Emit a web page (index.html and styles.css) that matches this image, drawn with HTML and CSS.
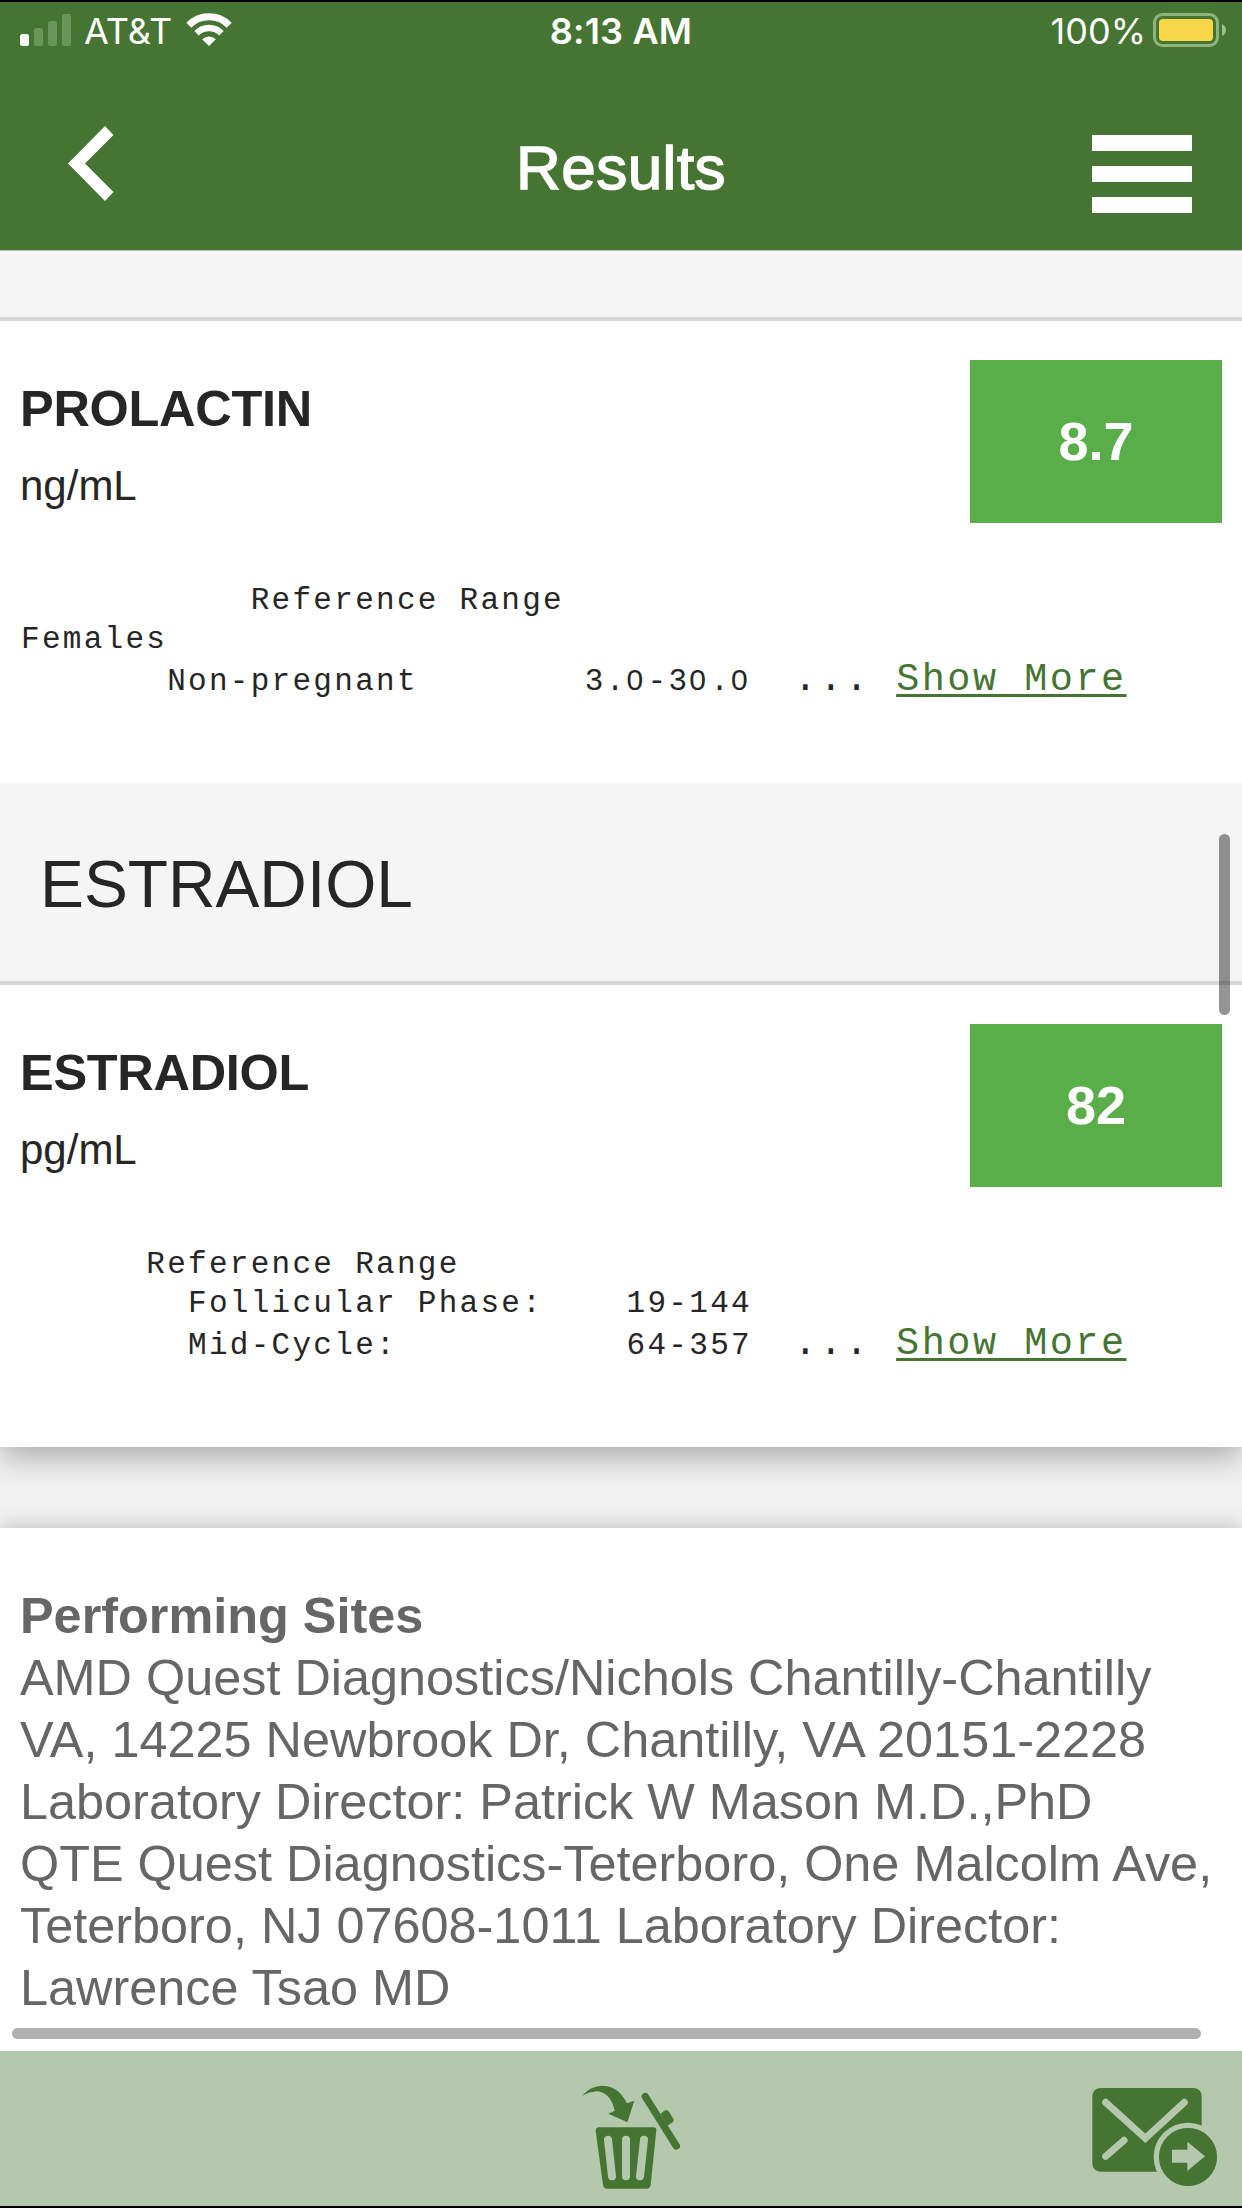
FILE: index.html
```html
<!DOCTYPE html>
<html lang="en">
<head>
    <meta charset="UTF-8">
    <meta name="viewport" content="width=device-width, initial-scale=1.0">
    <title>Results</title>
    <link rel="stylesheet" href="styles.css">
</head>
<body>
    <div class="phone">
        <div class="status">
            <div class="carrier">
                <svg width="51" height="32" viewBox="0 0 51 32" fill="#fff">
                    <rect x="0" y="20" width="9" height="12" rx="2.5"/>
                    <g fill="#6a965a">
                        <rect x="14" y="14" width="9" height="18" rx="2.5"/>
                        <rect x="28" y="7" width="9" height="25" rx="2.5"/>
                        <rect x="42" y="0" width="9" height="32" rx="2.5"/>
                    </g>
                </svg>
                <span>AT&amp;T</span>
                <svg class="wifi" width="46" height="33" viewBox="0 0 46 33">
                    <path d="M2.8 12.2a28.5 28.5 0 0 1 40.4 0" fill="none" stroke="#fff" stroke-width="7"/>
                    <path d="M10.6 20.2a17.5 17.5 0 0 1 24.8 0" fill="none" stroke="#fff" stroke-width="6.4"/>
                    <path d="M23 33l-6.800-6.800a9.600 9.600 0 0 1 13.600 0z" fill="#fff"/>
                </svg>
            </div>
            <div class="time">8:13 AM</div>
            <div class="battery">
                <span>100%</span>
                <svg width="74" height="34" viewBox="0 0 74 34">
                    <rect x="1.500" y="1.500" width="63" height="31" rx="8" fill="none" stroke="#8db57d" stroke-width="3"/>
                    <rect x="6" y="6" width="54" height="22" rx="4" fill="#f7d748"/>
                    <path d="M69 11q4 2 4 6t-4 6z" fill="#9cc08d"/>
                </svg>
            </div>
        </div>
        <div class="header">
            <svg class="back" width="46" height="75" viewBox="0 0 46 75">
                <path d="M37 0l8.500 9-28.500 28.500 28.500 28.500-8.500 9L0 37.500z" fill="#fff"/>
            </svg>
            <h1>Results</h1>
            <div class="menu"><i></i><i></i><i></i></div>
        </div>
        <div class="content">
            <div class="results">
                <div class="group first"></div>
                <div class="test">
                    <div class="row">
                        <div>
                            <h3>PROLACTIN</h3>
                            <p>ng/mL</p>
                        </div>
                        <div class="value">8.7</div>
                    </div>
<pre>           Reference Range
Females
       Non-pregnant        3.<i>0</i>-3<i>0</i>.<i>0</i>  <b>... <a href="#">Show More</a></b></pre>
                </div>
                <h2 class="group">ESTRADIOL</h2>
                <div class="test">
                    <div class="row">
                        <div>
                            <h3>ESTRADIOL</h3>
                            <p>pg/mL</p>
                        </div>
                        <div class="value">82</div>
                    </div>
<pre>      Reference Range
        Follicular Phase:    19-144
        Mid-Cycle:           64-357  <b>... <a href="#">Show More</a></b></pre>
                </div>
            </div>
            <div class="sites">
                <h4>Performing Sites</h4>
                <p>AMD Quest Diagnostics/Nichols Chantilly-Chantilly<br>
                VA, 14225 Newbrook Dr, Chantilly, VA 20151-2228<br>
                Laboratory Director: Patrick W Mason M.D.,PhD<br>
                QTE Quest Diagnostics-Teterboro, One Malcolm Ave,<br>
                Teterboro, NJ 07608-1011 Laboratory Director:<br>
                Lawrence Tsao MD</p>
            </div>
            <div class="scroll-y"></div>
            <div class="scroll-x"></div>
        </div>
        <div class="footer">
            <svg class="trash" width="100" height="107" viewBox="60 190 300 321">
                <g fill="#467533">
                    <path d="M66 228Q92 198 128 198C165 199 187 222 201 251L223 243L202 308L145 282L164 273C158 243 141 216 110 215Q88 216 66 228z"/>
                    <path d="M116 323H281Q290 323 289 332L272 496Q270 507 260 507H141Q131 507 129 496L107 334Q107 323 116 323z"/>
                    <path d="M302 282L313 273Q321 268 327 276L340 297Q343 305 336 309L322 318z"/>
                </g>
                <path d="M256 231L349 379" stroke="#467533" stroke-width="22" stroke-linecap="round"/>
                <path d="M144 360L156 470M198 360V470M252 360L240 470" stroke="#b3c8ad" stroke-width="24" stroke-linecap="round"/>
            </svg>
            <svg class="mail" width="130" height="100" viewBox="90 200 390 300">
                <rect x="97" y="203" width="328" height="251" rx="24" fill="#467533"/>
                <path d="M137 246L256 354L373 246M137 408L192 360" fill="none" stroke="#b3c8ad" stroke-width="21" stroke-linecap="round"/>
                <circle cx="384" cy="410" r="95" fill="#467533" stroke="#b3c8ad" stroke-width="16"/>
                <circle cx="384" cy="410" r="86" fill="#467533"/>
                <path d="M336 388H382V364L435 408L382 452V427H336z" fill="#b3c8ad"/>
            </svg>
        </div>
    </div>
</body>
</html>
```
FILE: styles.css
```css
*{
    margin: 0;
    padding: 0;
    box-sizing: border-box;
}
body{
    background: #000;
    font-family: "Liberation Sans", Arial, sans-serif;
    color: #262626;
}
.phone{
    width: 1242px;
    height: 2208px;
    border-top: 2px solid #000;
    border-bottom: 2px solid #000;
    display: flex;
    flex-direction: column;
    overflow: hidden;
}
.status{
    height: 58px;
    padding: 0 15px;
    background: #467533;
    color: #fff;
    display: grid;
    grid-template-columns: 1fr auto 1fr;
    font: 36px/58px Inter, sans-serif;
}
.carrier, .battery{
    display: flex;
    align-items: flex-start;
}
.carrier{
    padding-left: 5px;
}
.carrier svg{
    margin-top: 12px;
}
.carrier span{
    margin-left: 13px;
}
.carrier .wifi{
    margin-left: 14px;
    margin-top: 11px;
}
.time{
    font-weight: 600;
    letter-spacing: 0.2px;
}
.battery{
    justify-content: flex-end;
    gap: 7px;
}
.battery svg{
    margin-top: 11px;
}
.header{
    height: 190px;
    padding: 0 50px;
    background: #467533;
    color: #fff;
    display: grid;
    grid-template-columns: 1fr auto 1fr;
    align-items: start;
}
.header .back{
    margin: 66px 0 0 18px;
}
.header h1{
    font-size: 62px;
    font-weight: normal;
    line-height: 72px;
    letter-spacing: 0.5px;
    margin-top: 72px;
    -webkit-text-stroke: 1.5px #fff;
}
.menu{
    display: flex;
    flex-direction: column;
    gap: 15px;
    width: 100px;
    margin-top: 75px;
    justify-self: end;
}
.menu i{
    height: 16px;
    background: #fff;
}
.content{
    flex: 1;
    position: relative;
    border-top: 1px solid #bbb;
    background: #f2f2f2;
    overflow: hidden;
}
.results{
    background: #fff;
    box-shadow: 0 10px 30px rgba(0,0,0,0.3);
}
.group{
    height: 202px;
    padding-left: 40px;
    border-bottom: 4px solid #d8d8d8;
    background: #f5f5f5;
    font-size: 65.800px;
    font-weight: normal;
    line-height: 203px;
}
.group.first{
    height: 70px;
}
.test{
    height: 462px;
    padding: 39px 20px 0;
}
.row{
    display: flex;
    justify-content: space-between;
    height: 217px;
}
.test h3{
    font-size: 50.500px;
    line-height: 58px;
    letter-spacing: -0.3px;
    margin-top: 20px;
}
.test p{
    font-size: 42px;
    line-height: 48px;
    margin-top: 24px;
}
.value{
    width: 252px;
    height: 163px;
    background: #5aae49;
    color: #fff;
    font-size: 54px;
    font-weight: bold;
    line-height: 163px;
    text-align: center;
}
.test pre{
    padding: 4px 0 0 1px;
    font: 31px/39px "Liberation Mono", monospace;
    letter-spacing: 2.28px;
}
/* plain zero, the mono one has a dot in it */
.test pre i{
    font-family: "Liberation Sans", sans-serif;
    font-style: normal;
    font-size: 30px;
    letter-spacing: 4.200px;
}
.test pre b{
    font-size: 38.500px;
    font-weight: normal;
    line-height: 42px;
    letter-spacing: 2.500px;
}
.test a{
    color: #467533;
    text-decoration-thickness: 3px;
    text-underline-offset: 4px;
}
.sites{
    height: 540px;
    margin-top: 81px;
    padding: 57px 20px 0;
    background: #fff;
    box-shadow: 0 0 20px rgba(0,0,0,0.25);
    color: #666;
    font-size: 50.400px;
    line-height: 62px;
    white-space: nowrap;
}
.scroll-y{
    position: absolute;
    top: 583px;
    left: 1219px;
    width: 11px;
    height: 181px;
    border-radius: 6px;
    background: rgba(0,0,0,0.42);
}
.scroll-x{
    position: absolute;
    top: 1777px;
    left: 12px;
    width: 1189px;
    height: 11px;
    border-radius: 6px;
    background: #b0b0b0;
}
.footer{
    height: 155px;
    padding-right: 22px;
    background: #b3c8ad;
    display: grid;
    grid-template-columns: 580px 1fr auto;
}
.trash{
    grid-column: 2;
    margin-top: 32px;
}
.mail{
    margin-top: 36px;
}
```
